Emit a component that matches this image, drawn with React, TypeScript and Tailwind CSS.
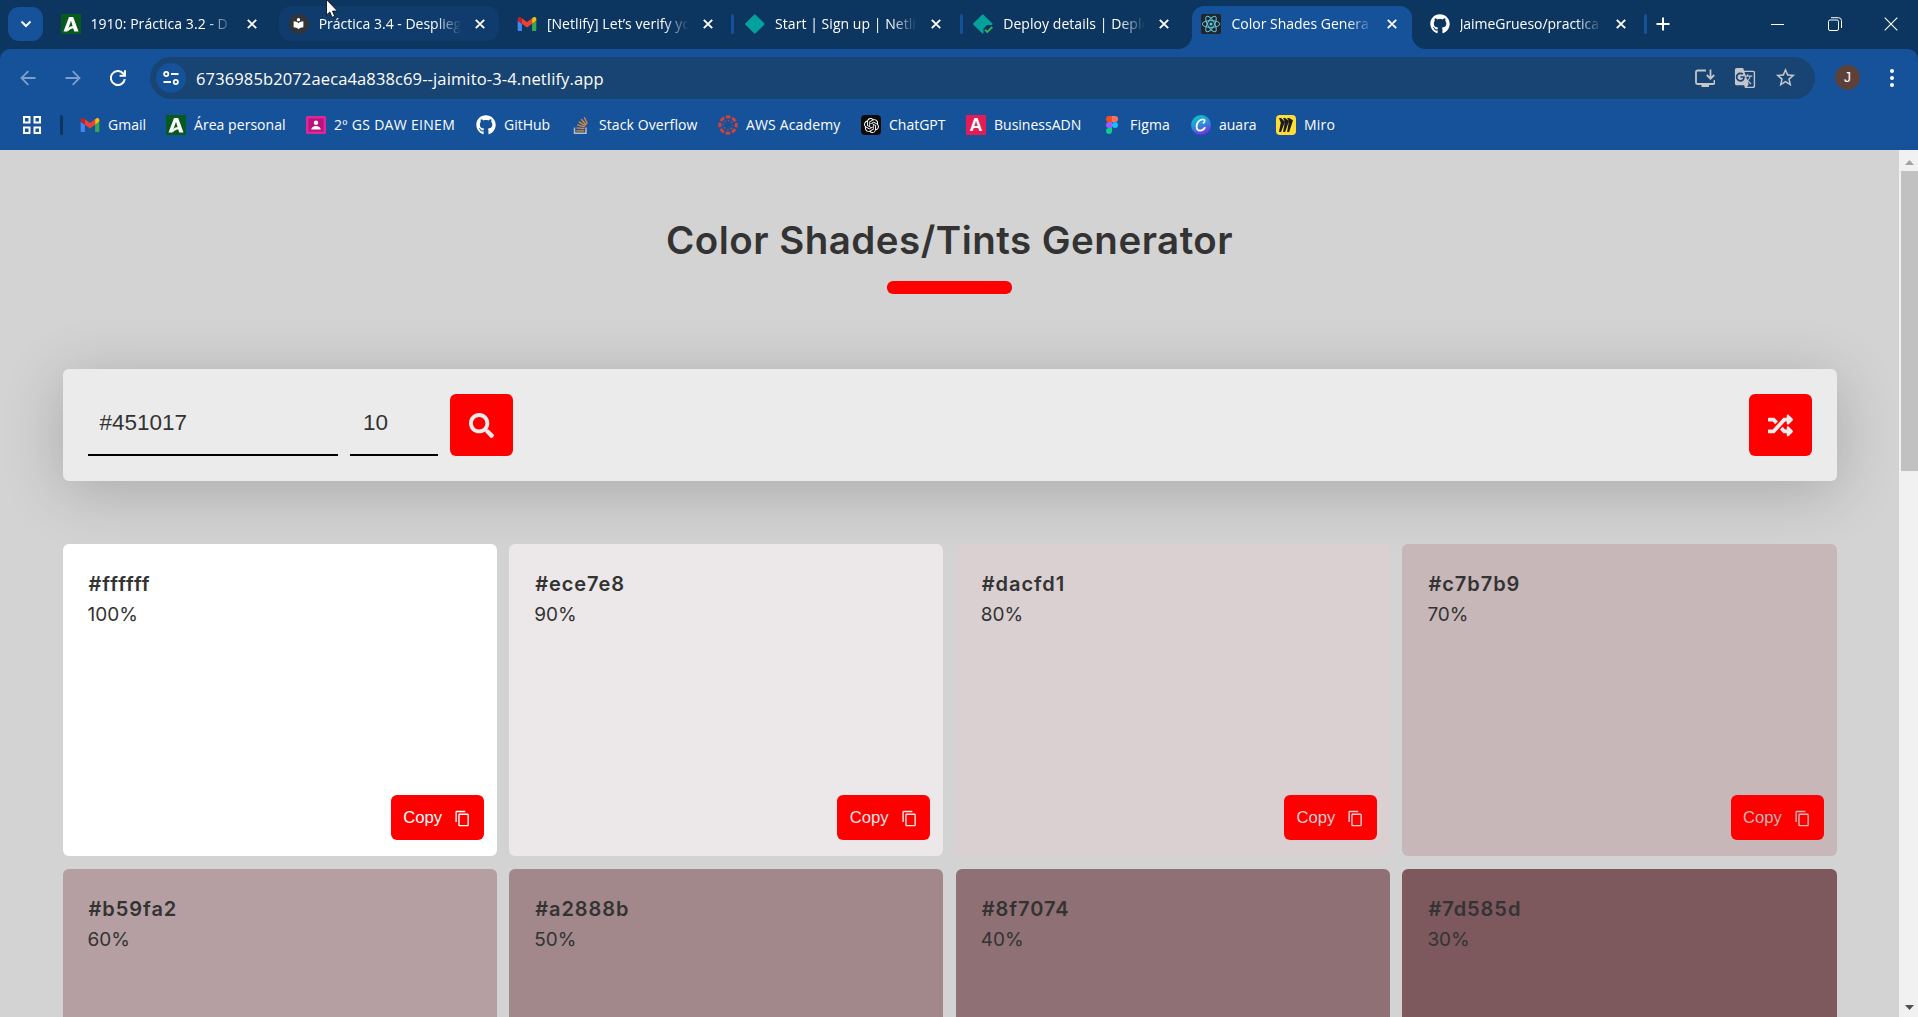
import type { ReactNode } from 'react';
import { FaGithub, FaRandom, FaSearch } from 'react-icons/fa';
import { MdContentCopy, MdGTranslate, MdLocalLibrary, MdStarBorder } from 'react-icons/md';
import { SiMiro, SiOpenai } from 'react-icons/si';

const ui = "font-['Open_Sans','Noto_Sans',sans-serif]";

function Junta() {
  return (
    <svg viewBox="0 0 20 20" className="size-5">
      <rect width="20" height="20" fill="#055a1c" />
      <path d="M2.5 17.5 8 3h4.2l5.3 14.5h-4.3L10 6.8 6.3 17.5z" fill="#fff" />
      <path d="M6.6 15.2c2-2.6 3.500-3.200 6-3.200l.9 2.200c-2.400-.2-4.200.5-6.900 3.300z" fill="#fff" />
    </svg>
  );
}

function Library() {
  return (
    <span className="flex size-5 items-center justify-center rounded-full bg-[#333436] text-white">
      <MdLocalLibrary className="size-[13px]" />
    </span>
  );
}

function Gmail() {
  return (
    <svg viewBox="52 42 88 66" className="h-[14px] w-5">
      <path fill="#4285f4" d="M58 108h14V74L52 59v43c0 3.320 2.690 6 6 6" />
      <path fill="#34a853" d="M120 108h14c3.320 0 6-2.690 6-6V59l-20 15" />
      <path fill="#fbbc04" d="M120 48v26l20-15v-8c0-7.420-8.470-11.650-14.400-7.200" />
      <path fill="#ea4335" d="M72 74V48l24 18 24-18v26L96 92" />
      <path fill="#c5221f" d="M52 51v8l20 15V48l-5.600-4.200c-5.940-4.450-14.400-.22-14.400 7.200" />
    </svg>
  );
}

function Netlify({ done = false }: { done?: boolean }) {
  return (
    <svg viewBox="0 0 20 20" className="size-5">
      <path d="M9.100.7a1 1 0 0 1 1.400 0l8.700 8.600a1 1 0 0 1 0 1.400l-8.700 8.600a1 1 0 0 1-1.400 0L.5 10.700a1 1 0 0 1 0-1.400z" fill="#05a29d" />
      {done && (
        <>
          <path d="M10.500 14.500 14 11h6v9h-9.500z" fill="#0c3560" />
          <path d="m12 15.800 2.300 2.200 5-5" fill="none" stroke="#2fb457" strokeWidth="1.900" />
        </>
      )}
    </svg>
  );
}

function ReactIcon() {
  return (
    <svg viewBox="0 0 20 20" className="size-5">
      <rect width="20" height="20" rx="2" fill="#20252b" />
      <g fill="none" stroke="#5ec5dc" strokeWidth="1">
        <ellipse cx="10" cy="10" rx="8.800" ry="3.400" />
        <ellipse cx="10" cy="10" rx="8.800" ry="3.400" transform="rotate(60 10 10)" />
        <ellipse cx="10" cy="10" rx="8.800" ry="3.400" transform="rotate(120 10 10)" />
      </g>
      <circle cx="10" cy="10" r="1.600" fill="#5ec5dc" />
    </svg>
  );
}

function Github() {
  return <FaGithub className="size-5 text-white" />;
}

function Close() {
  return (
    <svg viewBox="0 0 10 10" className="size-[10px]">
      <path d="m.8.8 8.400 8.400M9.200.8.8 9.200" stroke="#fff" strokeWidth="1.900" />
    </svg>
  );
}

function Classroom() {
  return (
    <svg viewBox="0 0 20 20" className="size-5">
      <rect y="1" width="20" height="18" rx="1.500" fill="#e0269a" />
      <rect x="2.500" y="3.500" width="15" height="13" fill="#b5127c" />
      <circle cx="10" cy="7.700" r="2.200" fill="#fff" />
      <path d="M5.300 14.500c0-2.300 2.300-3.500 4.700-3.500s4.700 1.200 4.700 3.500z" fill="#fff" />
    </svg>
  );
}

function StackOverflow() {
  return (
    <svg viewBox="0 0 20 20" className="size-5">
      <path d="M3.500 12.500v5.700h11.500v-5.700" fill="none" stroke="#bcbbbb" strokeWidth="1.500" />
      <path
        d="M5.300 15.800h7.900M5.500 12.900l7.800.8M6.200 9.900l7.500 2M7.800 6.900l6.700 3.800M10.300 4.300l5 5.700M13.300 2.300l3 6.500"
        stroke="#e58a3c"
        strokeWidth="1.300"
      />
    </svg>
  );
}

function CanvasLms() {
  return (
    <svg viewBox="0 0 20 20" className="size-5" fill="none" stroke="#d5423a">
      <circle cx="10" cy="10" r="8.200" strokeWidth="3" strokeDasharray="4.600 1.840" strokeDashoffset="2.300" />
      <circle cx="10" cy="10" r="4.600" strokeWidth="1.400" strokeDasharray="1.400 2.213" strokeDashoffset=".7" />
    </svg>
  );
}

function ChatGpt() {
  return (
    <span className="flex size-5 items-center justify-center rounded-[4px] bg-[#0b0b0c] text-white">
      <SiOpenai className="size-[15px]" />
    </span>
  );
}

function Adn() {
  return (
    <span className="flex size-5 items-center justify-center bg-[#e41b55] font-['Liberation_Sans',sans-serif] text-[18px] leading-none font-bold text-white">
      A
    </span>
  );
}

function Figma() {
  return (
    <svg viewBox="0 0 20 20" className="size-5">
      <path d="M7 1h3v6H7a3 3 0 0 1 0-6" fill="#f24e1e" />
      <path d="M10 1h3a3 3 0 0 1 0 6h-3z" fill="#ff7262" />
      <path d="M7 7h3v6H7a3 3 0 0 1 0-6" fill="#a259ff" />
      <circle cx="13" cy="10" r="3" fill="#1abcfe" />
      <path d="M7 13h3v3a3 3 0 1 1-3-3" fill="#0acf83" />
    </svg>
  );
}

function Canva() {
  return (
    <svg viewBox="0 0 20 20" className="size-5">
      <defs>
        <linearGradient id="canva" x1="0.2" y1="0" x2="0.6" y2="1">
          <stop offset="0" stopColor="#04c8cf" />
          <stop offset=".5" stopColor="#2b8fdc" />
          <stop offset="1" stopColor="#7a2ce8" />
        </linearGradient>
      </defs>
      <circle cx="10" cy="10" r="10" fill="url(#canva)" />
      <path
        d="M12.400 7.800c1.700-.4 2-3.500-.7-3.500-3.400 0-6.100 3.800-6.100 7.200 0 2.700 1.500 4.100 3.500 4.100 2.100 0 3.700-1.200 4.700-2.900"
        fill="none"
        stroke="#fff"
        strokeWidth="1.700"
        strokeLinecap="round"
      />
    </svg>
  );
}

function Miro() {
  return (
    <span className="flex size-5 items-center justify-center rounded-[4px] bg-[#ffdd33] text-[#1c1c1e]">
      <SiMiro className="size-[14px]" />
    </span>
  );
}

type TabState = 'idle' | 'hover' | 'active';

const tabs: { title: string; icon: ReactNode; state: TabState; sep: boolean; track: string }[] = [
  { title: '1910: Práctica 3.2 - D', icon: <Junta />, state: 'idle', sep: false, track: 'tracking-[0.05px]' },
  { title: 'Práctica 3.4 - Desplieg', icon: <Library />, state: 'hover', sep: false, track: '' },
  { title: '[Netlify] Let’s verify yo', icon: <Gmail />, state: 'idle', sep: true, track: 'tracking-[0.05px]' },
  { title: 'Start | Sign up | Netlif', icon: <Netlify />, state: 'idle', sep: true, track: 'tracking-[0.05px]' },
  { title: 'Deploy details | Deplo', icon: <Netlify done />, state: 'idle', sep: false, track: 'tracking-[0.05px]' },
  { title: 'Color Shades Genera', icon: <ReactIcon />, state: 'active', sep: false, track: '' },
  { title: 'JaimeGrueso/practica', icon: <Github />, state: 'idle', sep: true, track: '-tracking-[0.05px]' },
];

const tabBg: Record<TabState, string> = {
  idle: 'h-[35px]',
  hover: 'h-[35px] rounded-[12px] bg-[#0f3c6d]',
  active: 'h-[43px] rounded-t-[12px] bg-[#155299] pb-2',
};

function Flare({ side }: { side: 'left' | 'right' }) {
  return (
    <svg
      viewBox="0 0 14 14"
      className={side === 'left' ? 'absolute bottom-0 -left-[14px] size-[14px]' : 'absolute -right-[14px] bottom-0 size-[14px] -scale-x-100'}
    >
      <path d="M14 0v14H0A14 14 0 0 0 14 0" fill="#155299" />
    </svg>
  );
}

function TabStrip() {
  return (
    <div className="flex h-[49px] bg-[#0c3560] pl-2">
      <div className="mt-[7px] flex h-[34px] w-[35px] items-center justify-center rounded-[11px] bg-[#155299]">
        <svg viewBox="0 0 12 8" className="h-2 w-3">
          <path d="m1.500 1.500 4.500 4.500 4.500-4.500" fill="none" stroke="#fff" strokeWidth="2" />
        </svg>
      </div>
      <div className="ml-2 flex pt-[6px]">
        {tabs.map((t) => (
          <div key={t.title} className="flex w-[228.200px]">
            <div className={`relative flex w-[220px] items-center pl-[9.500px] ${tabBg[t.state]}`}>
              <span className="flex w-5 shrink-0 justify-center">{t.icon}</span>
              <span className="ml-[10px] w-[142px] shrink-0 mask-r-from-82% text-[14px] leading-5 whitespace-nowrap text-white">
                <span className={t.track}>{t.title}</span>
              </span>
              <span className="ml-[14px]">
                <Close />
              </span>
              {t.state === 'active' && (
                <>
                  <Flare side="left" />
                  <Flare side="right" />
                </>
              )}
            </div>
            {t.sep && <div className="mt-[8px] ml-[4px] h-5 w-[3px] rounded-full bg-[#155299]" />}
          </div>
        ))}
      </div>
      <svg viewBox="0 0 14 14" className="mt-[17px] ml-[8px] size-[14px]">
        <path d="M7 .5v13M.5 7h13" stroke="#fff" strokeWidth="2" />
      </svg>
      <div className="ml-auto flex h-[48px] items-center">
        <div className="flex w-[57px] justify-center">
          <div className="h-px w-[13px] bg-white" />
        </div>
        <div className="flex w-[57px] justify-center">
          <svg viewBox="0 0 14 14" className="size-[14px]" fill="none" stroke="#fff">
            <rect x=".5" y="3" width="10" height="10.500" rx="1.500" />
            <path d="M3 .700h7.500a3 3 0 0 1 3 3V11" />
          </svg>
        </div>
        <div className="flex w-[55px] justify-center">
          <svg viewBox="0 0 14 14" className="size-[14px]">
            <path d="m.7.7 12.600 12.600M13.300.7.7 13.300" stroke="#fff" strokeWidth="1.100" />
          </svg>
        </div>
      </div>
    </div>
  );
}

function Arrow({ flip = false }: { flip?: boolean }) {
  return (
    <svg viewBox="0 0 16 16" className={flip ? 'size-4 -scale-x-100' : 'size-4'} fill="none" stroke="#7ba0cb" strokeWidth="1.800">
      <path d="M15.500 8H1.500M8.300 1.200 1.500 8l6.800 6.800" />
    </svg>
  );
}

function Toolbar() {
  return (
    <div className="bg-[#0c3560]">
      <div className="flex h-[57px] items-center rounded-t-[10px] bg-[#155299] pl-5">
        <Arrow />
        <div className="ml-[29px]">
          <Arrow flip />
        </div>
        <svg viewBox="0 0 16 16" className="ml-[29px] size-4" fill="none" stroke="#fff" strokeWidth="2">
          <path d="M14.800 9.200A7 7 0 1 1 13 3.200L15 5.200" />
          <path d="M15 .3v5.400H9.600" />
        </svg>
        <div className="ml-6 flex h-[42px] w-[1665px] items-center rounded-full bg-[#184473] pl-[6px]">
          <div className="flex size-[30px] items-center justify-center rounded-full bg-[#155299]">
            <svg viewBox="0 0 16 14" className="h-[14px] w-4" fill="none" stroke="#fff" strokeWidth="1.800">
              <circle cx="3.200" cy="3" r="2.100" />
              <path d="M8 3h7.500M.5 11H8" />
              <circle cx="12.800" cy="11" r="2.100" />
            </svg>
          </div>
          <div className="ml-[10px] pt-0.5 text-[16.500px] leading-6 tracking-[0.13px] whitespace-nowrap text-white">
            6736985b2072aeca4a838c69--jaimito-3-4.netlify.app
          </div>
          <div className="mr-[18px] ml-auto flex items-center gap-[17px] text-[#c3c6ca]">
            <svg viewBox="0 0 20 20" className="mr-[2px] size-5" fill="none" stroke="currentColor" strokeWidth="1.800">
              <path d="M11 2.500H2.500a1.500 1.500 0 0 0-1.500 1.500v10.500A1.500 1.500 0 0 0 2.500 16h15.500a1.500 1.500 0 0 0 1.500-1.500V12" />
              <path d="M15.500 1.500v9M11.800 7l3.700 3.700L19.200 7" />
              <path d="M6.500 17.800h7.500" strokeWidth="2.400" />
            </svg>
            <MdGTranslate className="mr-px size-[22px]" />
            <MdStarBorder className="size-[23px]" />
          </div>
        </div>
        <div className="ml-5 flex size-[25px] items-center justify-center rounded-full bg-[#5d4037] font-['Liberation_Sans',sans-serif] text-[14px] text-white">
          J
        </div>
        <svg viewBox="0 0 4 18" className="ml-[30px] h-[18px] w-1" fill="#fff">
          <circle cx="2" cy="2" r="2" />
          <circle cx="2" cy="9" r="2" />
          <circle cx="2" cy="16" r="2" />
        </svg>
      </div>
    </div>
  );
}

const bookmarks: { label: string; icon: ReactNode; box: string }[] = [
  { label: 'Gmail', icon: <Gmail />, box: 'w-[86px]' },
  { label: 'Área personal', icon: <Junta />, box: 'w-[140px] tracking-[0.05px]' },
  { label: '2º GS DAW EINEM', icon: <Classroom />, box: 'w-[170px] tracking-[0.3px]' },
  { label: 'GitHub', icon: <Github />, box: 'w-[95px]' },
  { label: 'Stack Overflow', icon: <StackOverflow />, box: 'w-[147px] tracking-[0.1px]' },
  { label: 'AWS Academy', icon: <CanvasLms />, box: 'w-[143px] tracking-[0.15px]' },
  { label: 'ChatGPT', icon: <ChatGpt />, box: 'w-[105px]' },
  { label: 'BusinessADN', icon: <Adn />, box: 'w-[136px]' },
  { label: 'Figma', icon: <Figma />, box: 'w-[89px] tracking-[0.2px]' },
  { label: 'auara', icon: <Canva />, box: 'w-[85px]' },
  { label: 'Miro', icon: <Miro />, box: 'w-[85px] tracking-[0.2px]' },
];

function Bookmarks() {
  return (
    <div className="flex h-[44px] items-center bg-[#155299] pb-[6px] pl-[23px]">
      <svg viewBox="0 0 18 18" className="size-[18px]" fill="none" stroke="#fff" strokeWidth="2">
        <rect x="1" y="1" width="5.500" height="5.500" />
        <rect x="11.500" y="1" width="5.500" height="5.500" />
        <rect x="1" y="11.500" width="5.500" height="5.500" />
        <rect x="11.500" y="11.500" width="5.500" height="5.500" />
      </svg>
      <div className="mr-[17px] ml-[19px] h-5 w-[3px] rounded-full bg-[#0c3560]" />
      {bookmarks.map((b) => (
        <div key={b.label} className={`flex shrink-0 items-center gap-2 ${b.box}`}>
          <span className="shrink-0">{b.icon}</span>
          <span className="text-[14px] leading-5 whitespace-nowrap text-white">{b.label}</span>
        </div>
      ))}
    </div>
  );
}

const shades = [
  { hex: '#ffffff', pct: '100%', bg: 'bg-[#ffffff]', fg: 'text-[#ffffff]' },
  { hex: '#ece7e8', pct: '90%', bg: 'bg-[#ece7e8]', fg: 'text-[#ece7e8]' },
  { hex: '#dacfd1', pct: '80%', bg: 'bg-[#dacfd1]', fg: 'text-[#dacfd1]' },
  { hex: '#c7b7b9', pct: '70%', bg: 'bg-[#c7b7b9]', fg: 'text-[#c7b7b9]' },
  { hex: '#b59fa2', pct: '60%', bg: 'bg-[#b59fa2]', fg: 'text-[#b59fa2]' },
  { hex: '#a2888b', pct: '50%', bg: 'bg-[#a2888b]', fg: 'text-[#a2888b]' },
  { hex: '#8f7074', pct: '40%', bg: 'bg-[#8f7074]', fg: 'text-[#8f7074]' },
  { hex: '#7d585d', pct: '30%', bg: 'bg-[#7d585d]', fg: 'text-[#7d585d]' },
];

function Card({ hex, pct, bg, fg }: (typeof shades)[number]) {
  return (
    <div className={`flex h-[312px] flex-col rounded-[6px] p-[25px] pr-[13px] pb-4 text-[19px] leading-[30px] text-[#333] ${bg}`}>
      <div className="pl-px text-[20px] font-semibold tracking-[0.95px]">{hex}</div>
      <div className="pt-px">{pct}</div>
      <button
        className={`mt-auto flex h-[45px] w-[93px] items-center self-end rounded-[6px] bg-[#ff0000] pl-[12.500px] font-['Liberation_Sans',sans-serif] text-[16.670px] ${fg}`}
      >
        Copy
        <MdContentCopy className="mt-[2px] ml-3 size-[17px]" />
      </button>
    </div>
  );
}

function Page() {
  return (
    <div className="min-w-0 flex-1 bg-[#d3d3d3] px-[62.500px] font-['Inter',sans-serif]">
      <h1 className="mt-[60px] text-center text-[38.500px] leading-[60px] font-semibold tracking-[0.480px] text-[#333]">
        Color Shades/Tints Generator
      </h1>
      <div className="mx-auto mt-[11px] h-[13px] w-[125px] rounded-[6px] bg-[#ff0000]" />
      <div className="mt-[75px] flex h-[112px] items-center rounded-[6px] bg-[#ebebeb] px-[25px] font-['Liberation_Sans',sans-serif] text-[22.500px] text-[#333] shadow-[0_10px_62px_rgba(0,0,0,0.2)]">
        <div className="flex h-[62px] w-[250px] items-center border-b-2 border-black pb-0.5 pl-3">#451017</div>
        <div className="ml-3 flex h-[62px] w-[88px] items-center border-b-2 border-black pb-0.5 pl-[13.500px]">10</div>
        <button className="ml-3 flex h-[62px] w-[63px] items-center justify-center rounded-[6px] bg-[#ff0000] text-[#ebebeb]">
          <FaSearch className="size-[25px]" />
        </button>
        <button className="ml-auto flex h-[62px] w-[63px] items-center justify-center rounded-[6px] bg-[#ff0000] text-[#ebebeb]">
          <FaRandom className="size-[25px]" />
        </button>
      </div>
      <div className="mt-[63px] grid grid-cols-4 gap-x-[12.500px] gap-y-[13px]">
        {shades.map((s) => (
          <Card key={s.hex} {...s} />
        ))}
      </div>
    </div>
  );
}

function Scrollbar() {
  return (
    <div className="flex w-[19px] flex-col items-end bg-[#f1f1f1]">
      <div className="flex h-[21px] w-[17px] items-center justify-center">
        <svg viewBox="0 0 9 5" className="mt-[3px] h-[5px] w-[9px]">
          <path d="M0 5 4.500 0 9 5z" fill="#a3a3a3" />
        </svg>
      </div>
      <div className="h-[300px] w-[17px] bg-[#c1c1c1]" />
      <div className="mt-auto flex h-5 w-[17px] items-center justify-center">
        <svg viewBox="0 0 9 5" className="h-[5px] w-[9px]">
          <path d="M0 0h9L4.500 5z" fill="#505050" />
        </svg>
      </div>
    </div>
  );
}

export default function App() {
  return (
    <div className={`relative flex h-[1017px] w-[1918px] flex-col overflow-hidden ${ui}`}>
      <TabStrip />
      <Toolbar />
      <Bookmarks />
      <div className="flex min-h-0 flex-1 overflow-hidden">
        <Page />
        <Scrollbar />
      </div>
      <svg viewBox="0 0 12 18" className="absolute top-0 left-[326px] h-[18px] w-3">
        <path d="M.5-.5v15.600l3.300-3.100 2.300 5.300 2.600-1.100-2.200-5.100h5z" fill="#fff" stroke="#111" strokeWidth=".9" />
      </svg>
    </div>
  );
}
